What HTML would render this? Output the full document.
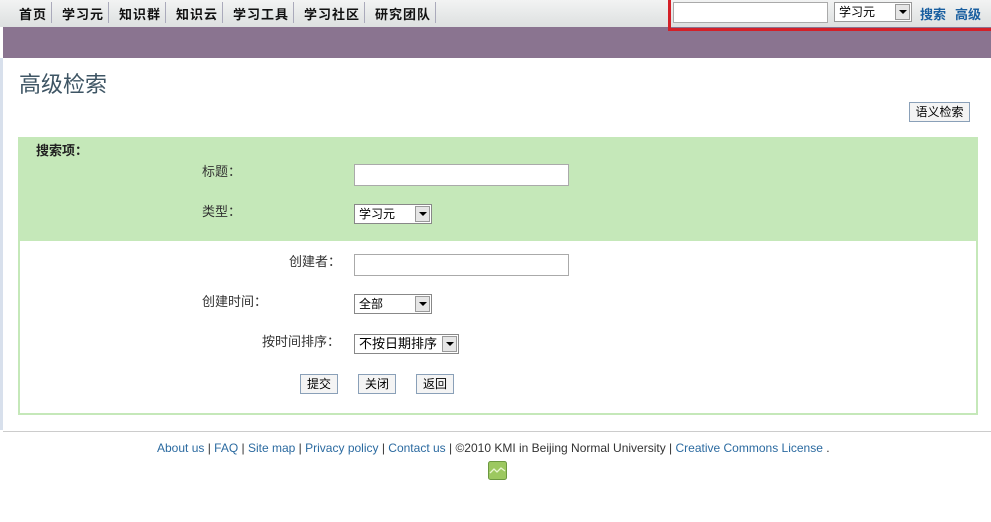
<!DOCTYPE html>
<html><head><meta charset="utf-8"><style>
*{margin:0;padding:0;box-sizing:border-box}
body{width:991px;height:522px;background:#fff;font-family:"Liberation Sans","Noto Sans CJK SC",sans-serif;font-size:12px;position:relative;overflow:hidden}
.a{position:absolute}
.nav{left:0;top:0;width:991px;height:27px;background:linear-gradient(#f2f3f3,#dde0e0)}
.nav span{position:absolute;top:4px;font-weight:bold;font-size:13px;color:#111;letter-spacing:1px}
.sep{position:absolute;top:2px;width:1px;height:21px;background:#aab}
.purple{left:3px;top:27px;width:988px;height:31px;background:#8a7490}
.inp{background:#fff;border:1px solid #aaa}
.sel{background:#fff;border:1px solid #888;font-size:12px;padding-left:4px;line-height:18px}
.sel i{position:absolute;right:1px;top:1px;width:15px;height:16px;background:#e6e6e6;border:1px solid #999}
.sel i:after{content:"";position:absolute;left:3px;top:5px;border:4px solid transparent;border-top:4px solid #000}
.btn{border:1px solid #8aa0b8;background:#f4f4f4;font-size:12px;text-align:center;line-height:18px}
.lbl{font-size:13px;color:#333}
</style></head><body>
<div class="a nav">
<span style="left:19px">首页</span><div class="sep" style="left:51px"></div>
<span style="left:62px">学习元</span><div class="sep" style="left:108px"></div>
<span style="left:119px">知识群</span><div class="sep" style="left:165px"></div>
<span style="left:176px">知识云</span><div class="sep" style="left:222px"></div>
<span style="left:233px">学习工具</span><div class="sep" style="left:293px"></div>
<span style="left:304px">学习社区</span><div class="sep" style="left:364px"></div>
<span style="left:375px">研究团队</span><div class="sep" style="left:435px"></div>
</div>
<div class="a purple"></div>
<div class="a" style="left:0;top:58px;width:3px;height:372px;background:#d8e0ec"></div>
<div class="a" style="left:3px;top:58px;width:988px;height:10px;background:#fff;border-top-left-radius:6px"></div>
<div class="a" style="left:668px;top:0;width:323px;height:31px;border:3px solid #d42028;border-right:none;border-top:none"></div>
<div class="a inp" style="left:673px;top:2px;width:155px;height:21px"></div>
<div class="a sel" style="left:834px;top:2px;width:78px;height:20px;border-color:#999">学习元<i></i></div>
<span class="a" style="left:920px;top:4px;font-weight:bold;font-size:13px;color:#1a5fa0">搜索</span>
<span class="a" style="left:955px;top:4px;font-weight:bold;font-size:13px;color:#1a5fa0">高级</span>
<div class="a" style="left:19px;top:67px;font-size:22px;color:#3e5564">高级检索</div>
<div class="a btn" style="left:909px;top:102px;width:61px;height:20px">语义检索</div>
<div class="a" style="left:18px;top:137px;width:960px;height:278px;border:2px solid #c5e8b9;border-top:none"></div>
<div class="a" style="left:18px;top:137px;width:960px;height:104px;background:#c5e8b9"></div>
<div class="a" style="left:36px;top:140px;font-weight:bold;font-size:13px;color:#222">搜索项：</div>
<div class="a lbl" style="left:202px;top:161px">标题：</div>
<div class="a inp" style="left:354px;top:164px;width:215px;height:22px"></div>
<div class="a lbl" style="left:202px;top:201px">类型：</div>
<div class="a sel" style="left:354px;top:204px;width:78px;height:20px">学习元<i></i></div>
<div class="a lbl" style="left:289px;top:251px">创建者：</div>
<div class="a inp" style="left:354px;top:254px;width:215px;height:22px"></div>
<div class="a lbl" style="left:202px;top:291px">创建时间：</div>
<div class="a sel" style="left:354px;top:294px;width:78px;height:20px">全部<i></i></div>
<div class="a lbl" style="left:262px;top:331px">按时间排序：</div>
<div class="a sel" style="left:354px;top:334px;width:105px;height:20px;font-size:13px">不按日期排序<i></i></div>
<div class="a btn" style="left:300px;top:374px;width:38px;height:20px">提交</div>
<div class="a btn" style="left:358px;top:374px;width:38px;height:20px">关闭</div>
<div class="a btn" style="left:416px;top:374px;width:38px;height:20px">返回</div>
<div class="a" style="left:3px;top:431px;width:988px;height:1px;background:#ccc"></div>
<div class="a" style="left:157px;top:441px;white-space:nowrap;color:#333;font-size:12px"><span style="color:#2b6aa0">About us</span> | <span style="color:#2b6aa0">FAQ</span> | <span style="color:#2b6aa0">Site map</span> | <span style="color:#2b6aa0">Privacy policy</span> | <span style="color:#2b6aa0">Contact us</span> | ©2010 KMI in Beijing Normal University | <span style="color:#2b6aa0">Creative Commons License</span> .</div>
<svg class="a" style="left:488px;top:461px" width="19" height="19"><rect x="0.5" y="0.5" width="18" height="18" rx="2" fill="#9cc860" stroke="#6c9840"/><path d="M2 12 L6 8 L9 11 L13 7 L17 10" stroke="#e8f5d0" fill="none" stroke-width="1.3"/></svg>
</body></html>
